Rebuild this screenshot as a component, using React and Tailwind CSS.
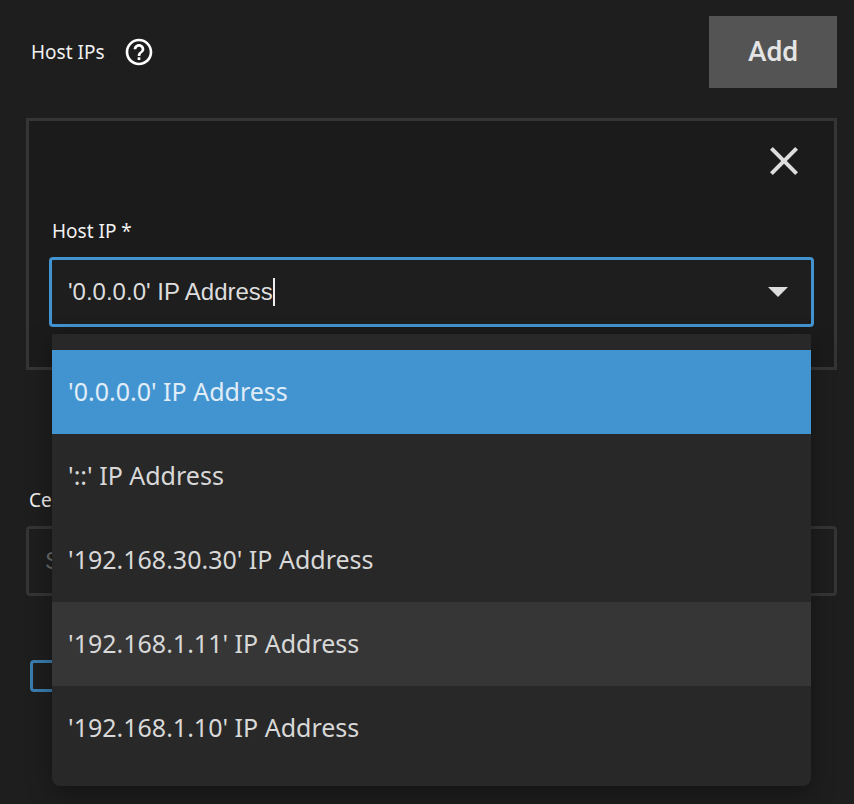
import React, { useState } from 'react'
import { MdClose, MdHelpOutline } from 'react-icons/md'

const OPTIONS = [
  "'0.0.0.0' IP Address",
  "'::' IP Address",
  "'192.168.30.30' IP Address",
  "'192.168.1.11' IP Address",
  "'192.168.1.10' IP Address",
]

function ArrowIcon() {
  return (
    <svg viewBox="0 0 20 10" className="w-5 h-[10px]" fill="currentColor">
      <path d="M0 0h20L10 10z" />
    </svg>
  )
}

function OptionList({ selected, hovered, onSelect, onHover }) {
  return (
    <ul
      id="host-ip-options"
      role="listbox"
      aria-label="Host IP options"
      className="absolute z-10 top-full left-0 right-0 mt-[7px] mx-[3px] py-4 rounded-b-lg bg-[#282828] shadow-[0_8px_24px_rgba(0,0,0,0.35)]"
    >
      {OPTIONS.map(option => (
        <li
          key={option}
          role="option"
          aria-selected={option === selected}
          onClick={() => onSelect(option)}
          onMouseEnter={() => onHover(option)}
          className={`flex items-center h-[84px] px-4 text-[25px] cursor-pointer ${
            option === selected
              ? 'bg-[#4294d1] text-[#e0edf7]'
              : option === hovered
                ? 'bg-[#363636] text-[#d8d8d8]'
                : 'text-[#d8d8d8]'
          }`}
        >
          {option}
        </li>
      ))}
    </ul>
  )
}

function HostIpField() {
  const [value, setValue] = useState(OPTIONS[0])
  const [hovered, setHovered] = useState(OPTIONS[3])

  return (
    <div>
      <label htmlFor="host-ip" className="block px-[3px] text-[19px] leading-6 text-[#f0f0f0]">
        Host IP *
      </label>
      <div className="relative mt-[14px]">
        <div className="flex items-center h-[70px] pl-4 pr-[23px] rounded border-3 border-[#4294d1] bg-[#1e1e1e] text-[#dddddd]">
          <input
            id="host-ip"
            role="combobox"
            aria-expanded="true"
            aria-controls="host-ip-options"
            value={value}
            onChange={e => setValue(e.target.value)}
            className="field-sizing-content font-['Liberation_Sans',sans-serif] text-2xl bg-transparent outline-none caret-transparent"
          />
          {/* Text cursor */}
          <span className="w-[2px] h-7 bg-[#eeeeee]" />
          <button type="button" aria-label="Toggle options" className="ml-auto">
            <ArrowIcon />
          </button>
        </div>
        <OptionList selected={value} hovered={hovered} onSelect={setValue} onHover={setHovered} />
      </div>
    </div>
  )
}

export default function App() {
  return (
    <main className="min-h-screen pt-4 pb-28 pl-[26px] pr-[17px] bg-[#1e1e1e] font-['Noto_Sans',sans-serif]">
      <header className="flex items-center justify-between pl-[5px]">
        <div className="flex items-center gap-[18px]">
          <h2 className="text-[19px] leading-6 text-[#f0f0f0]">Host IPs</h2>
          <button type="button" aria-label="Help" className="text-white">
            <MdHelpOutline className="w-8 h-8" />
          </button>
        </div>
        <button
          type="button"
          className="w-32 h-[72px] bg-[#545454] font-['Roboto',sans-serif] font-medium text-[28px] text-[#e4e4e4]"
        >
          Add
        </button>
      </header>

      {/* Host IP entry */}
      <section className="mt-[30px] pt-4 pb-10 px-5 border-3 border-[#353535] bg-[#1b1b1b]">
        <div className="flex justify-end pr-[6px]">
          <button type="button" aria-label="Remove" className="text-[#dddddd]">
            <MdClose className="w-12 h-12" />
          </button>
        </div>
        <div className="mt-[34px]">
          <HostIpField />
        </div>
      </section>

      {/* Certificate */}
      <section className="mt-[118px]">
        <label htmlFor="certificate" className="block px-[3px] text-[19px] leading-6 text-[#f0f0f0]">
          Certificate
        </label>
        <input
          id="certificate"
          placeholder="Select"
          className="block w-full h-[70px] mt-[14px] px-4 rounded border-3 border-[#353535] bg-[#1e1e1e] font-['Liberation_Sans',sans-serif] text-2xl text-[#dddddd] placeholder:text-[#6a6a6a]"
        />
      </section>

      <div className="mt-16 pl-1">
        <input
          type="checkbox"
          aria-label="Enabled"
          className="block appearance-none w-8 h-8 rounded-sm border-3 border-[#397cae]"
        />
      </div>
    </main>
  )
}
